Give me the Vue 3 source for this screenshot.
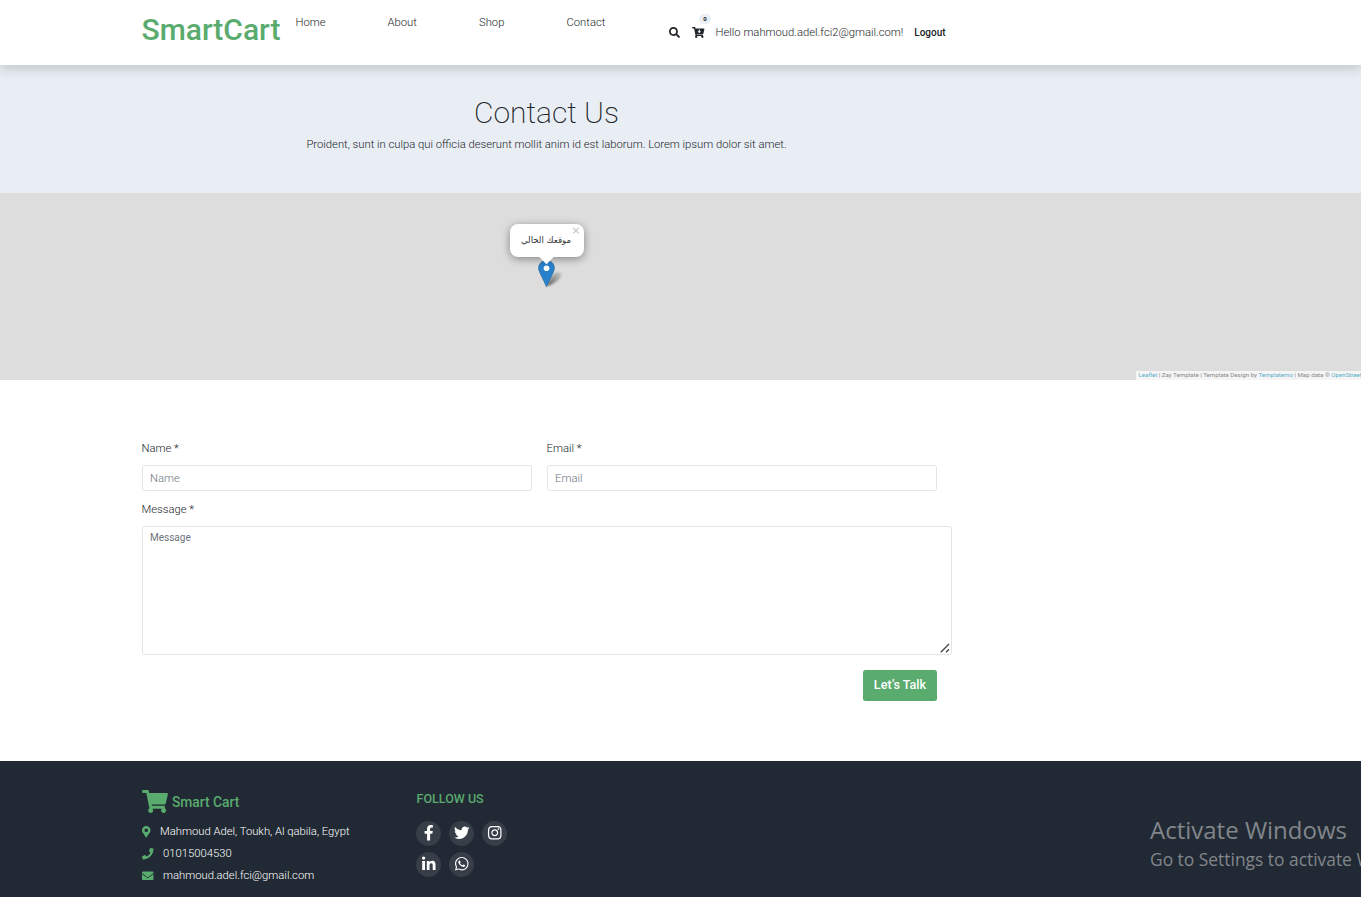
<script setup>
const links = ['Home', 'About', 'Shop', 'Contact']

const icons = {
  search: { box: '0 0 512 512', d: 'M505 442.7L405.3 343c-4.5-4.5-10.6-7-17-7H372c27.6-35.3 44-79.7 44-128C416 93.1 322.9 0 208 0S0 93.1 0 208s93.1 208 208 208c48.3 0 92.7-16.4 128-44v16.3c0 6.4 2.5 12.5 7 17l99.7 99.7c9.4 9.4 24.6 9.4 33.9 0l28.3-28.3c9.4-9.4 9.4-24.6.1-34zM208 336c-70.7 0-128-57.2-128-128 0-70.7 57.2-128 128-128 70.7 0 128 57.2 128 128 0 70.7-57.2 128-128 128z' },
  cartDown: { box: '0 0 576 512', d: 'M504.717 320H211.572l6.545 32h268.418c15.401 0 26.816 14.301 23.403 29.319l-5.517 24.276C523.112 414.668 536 433.828 536 456c0 31.202-25.519 56.444-56.824 55.994-29.823-.429-54.35-24.631-55.155-54.447-.44-16.287 6.085-31.049 16.803-41.548H231.176C241.553 426.165 248 440.326 248 456c0 31.813-26.528 57.431-58.67 55.938-28.54-1.325-51.751-24.385-53.251-52.917-1.158-22.034 10.436-41.455 28.051-51.586L93.883 64H24C10.745 64 0 53.255 0 40V24C0 10.745 10.745 0 24 0h102.529c11.401 0 21.228 8.021 23.513 19.19L159.208 64H551.99c15.401 0 26.816 14.301 23.403 29.319l-47.273 208C525.637 312.246 515.923 320 504.717 320zM403.029 192H360v-60c0-6.627-5.373-12-12-12h-24c-6.627 0-12 5.373-12 12v60h-43.029c-10.691 0-16.045 12.926-8.485 20.485l67.029 67.029c4.686 4.686 12.284 4.686 16.971 0l67.029-67.029c7.559-7.559 2.205-20.485-8.486-20.485z' },
  cart: { box: '0 0 576 512', d: 'M528.12 301.319l47.273-208C578.806 78.301 567.391 64 551.99 64H159.208l-9.166-44.81C147.758 8.021 137.93 0 126.529 0H24C10.745 0 0 10.745 0 24v16c0 13.255 10.745 24 24 24h69.883l70.248 343.435C147.325 417.1 136 435.222 136 456c0 30.928 25.072 56 56 56s56-25.072 56-56c0-15.674-6.447-29.835-16.824-40h209.647C430.447 426.165 424 440.326 424 456c0 30.928 25.072 56 56 56s56-25.072 56-56c0-22.172-12.888-41.332-31.579-50.405l5.517-24.276c3.413-15.018-8.002-29.319-23.403-29.319H218.117l-6.545-32h293.145c11.206 0 20.92-7.754 23.403-18.681z' }
}

const contacts = [
  { text: 'Mahmoud Adel, Toukh, Al qabila, Egypt', kind: 'place', box: '0 0 384 512', d: 'M172.268 501.67C26.97 291.031 0 269.413 0 192 0 85.961 85.961 0 192 0s192 85.961 192 192c0 77.413-26.97 99.031-172.268 309.67-9.535 13.774-29.93 13.773-39.464 0zM192 272c44.183 0 80-35.817 80-80s-35.817-80-80-80-80 35.817-80 80 35.817 80 80 80z' },
  { text: '01015004530', kind: 'phone', box: '0 0 512 512', d: 'M493.4 24.6l-104-24c-11.3-2.6-22.9 3.3-27.5 13.9l-48 112c-4.2 9.8-1.4 21.3 6.9 28l60.6 49.6c-36 76.7-98.9 140.5-177.2 177.2l-49.6-60.6c-6.8-8.3-18.2-11.1-28-6.9l-112 48C3.9 366.5-2 378.1.6 389.4l24 104C27.1 504.2 36.7 512 48 512c256.1 0 464-207.5 464-464 0-11.2-7.7-20.9-18.6-23.4z' },
  { text: 'mahmoud.adel.fci@gmail.com', kind: 'mail', box: '0 0 512 512', d: 'M502.3 190.8c3.9-3.1 9.7-.2 9.7 4.7V400c0 26.5-21.5 48-48 48H48c-26.5 0-48-21.5-48-48V195.6c0-5 5.7-7.8 9.7-4.7 22.4 17.4 52.1 39.5 154.1 113.6 21.1 15.4 56.7 47.8 92.2 47.6 35.7.3 72-32.8 92.3-47.6 102-74.1 131.6-96.3 154-113.7zM256 320c23.2.4 56.6-29.2 73.4-41.4 132.7-96.3 142.8-104.7 173.4-128.7 5.8-4.5 9.2-11.5 9.2-18.9v-19c0-26.5-21.5-48-48-48H48c-26.5 0-48 21.5-48 48v19c0 7.4 3.4 14.3 9.2 18.9 30.6 23.9 40.7 32.4 173.4 128.7 16.8 12.2 50.2 41.8 73.4 41.4z' }
]

const socials = [
  { name: 'facebook', box: '0 0 320 512', d: 'M279.14 288l14.22-92.66h-88.91v-60.13c0-25.35 12.42-50.06 52.24-50.06h40.42V6.26S260.43 0 225.36 0c-73.22 0-121.08 44.38-121.08 124.72v70.62H22.89V288h81.39v224h100.17V288z' },
  { name: 'twitter', box: '0 0 512 512', d: 'M459.37 151.716c.325 4.548.325 9.097.325 13.645 0 138.72-105.583 298.558-298.558 298.558-59.452 0-114.68-17.219-161.137-47.106 8.447.974 16.568 1.299 25.34 1.299 49.055 0 94.213-16.568 130.274-44.832-46.132-.975-84.792-31.188-98.112-72.772 6.498.974 12.995 1.624 19.818 1.624 9.421 0 18.843-1.3 27.614-3.573-48.081-9.747-84.143-51.98-84.143-102.985v-1.299c13.969 7.797 30.214 12.67 47.431 13.319-28.264-18.843-46.781-51.005-46.781-87.391 0-19.492 5.197-37.36 14.294-52.954 51.655 63.675 129.3 105.258 216.365 109.807-1.624-7.797-2.599-15.918-2.599-24.04 0-57.828 46.782-104.934 104.934-104.934 30.213 0 57.502 12.67 76.67 33.137 23.715-4.548 46.456-13.32 66.599-25.34-7.798 24.366-24.366 44.833-46.132 57.827 21.117-2.273 41.584-8.122 60.426-16.243-14.292 20.791-32.161 39.308-52.628 54.253z' },
  { name: 'instagram', box: '0 0 448 512', d: 'M224.1 141c-63.6 0-114.9 51.3-114.9 114.9s51.3 114.9 114.9 114.9S339 319.5 339 255.9 287.7 141 224.1 141zm0 189.6c-41.1 0-74.7-33.5-74.7-74.7s33.5-74.7 74.7-74.7 74.7 33.5 74.7 74.7-33.6 74.7-74.7 74.7zm146.4-194.3c0 14.9-12 26.8-26.8 26.8-14.9 0-26.8-12-26.8-26.8s12-26.8 26.8-26.8 26.8 12 26.8 26.8zm76.1 27.2c-1.7-35.9-9.9-67.7-36.2-93.9-26.2-26.2-58-34.4-93.9-36.2-37-2.1-147.9-2.1-184.9 0-35.8 1.7-67.6 9.9-93.9 36.1s-34.4 58-36.2 93.9c-2.1 37-2.1 147.9 0 184.9 1.7 35.9 9.9 67.7 36.2 93.9s58 34.4 93.9 36.2c37 2.1 147.9 2.1 184.9 0 35.9-1.7 67.7-9.9 93.9-36.2 26.2-26.2 34.4-58 36.2-93.9 2.1-37 2.1-147.8 0-184.8zM398.8 388c-7.8 19.6-22.9 34.7-42.6 42.6-29.5 11.7-99.5 9-132.1 9s-102.7 2.6-132.1-9c-19.6-7.8-34.7-22.9-42.6-42.6-11.7-29.5-9-99.5-9-132.1s-2.6-102.7 9-132.1c7.8-19.6 22.9-34.7 42.6-42.6 29.5-11.7 99.5-9 132.1-9s102.7-2.6 132.1 9c19.6 7.8 34.7 22.9 42.6 42.6 11.7 29.5 9 99.5 9 132.1s2.7 102.7-9 132.1z' },
  { name: 'linkedin', box: '0 -16 448 512', d: 'M100.28 448H7.4V148.9h92.88zM53.79 108.1C24.09 108.1 0 83.5 0 53.8a53.79 53.79 0 0 1 107.58 0c0 29.7-24.1 54.3-53.79 54.3zM447.9 448h-92.68V302.4c0-34.7-.7-79.2-48.29-79.2-48.29 0-55.69 37.7-55.69 76.7V448h-92.78V148.9h89.08v40.8h1.3c12.4-23.5 42.69-48.3 87.88-48.3 94 0 111.28 61.9 111.28 142.3V448z' },
  { name: 'whatsapp', box: '0 0 448 512', d: 'M380.9 97.1C339 55.1 283.2 32 223.9 32c-122.4 0-222 99.6-222 222 0 39.1 10.2 77.3 29.6 111L0 480l117.7-30.9c32.4 17.7 68.9 27 106.1 27h.1c122.3 0 224.1-99.6 224.1-222 0-59.3-25.2-115-67.1-157zm-157 341.6c-33.2 0-65.7-8.9-94-25.7l-6.7-4-69.8 18.3L72 359.2l-4.4-7c-18.5-29.4-28.2-63.3-28.2-98.2 0-101.7 82.8-184.5 184.6-184.5 49.3 0 95.6 19.2 130.4 54.1 34.8 34.9 56.2 81.2 56.1 130.5 0 101.8-84.9 184.6-186.6 184.6zm101.2-138.2c-5.5-2.8-32.8-16.2-37.9-18-5.1-1.9-8.8-2.8-12.5 2.8-3.7 5.6-14.3 18-17.6 21.8-3.2 3.7-6.5 4.2-12 1.4-32.6-16.3-54-29.1-75.5-66-5.7-9.8 5.7-9.1 16.3-30.3 1.8-3.7.9-6.9-.5-9.7-1.4-2.8-12.5-30.1-17.1-41.2-4.5-10.8-9.1-9.3-12.5-9.5-3.2-.2-6.9-.2-10.6-.2-3.7 0-9.7 1.4-14.8 6.9-5.1 5.6-19.4 19-19.4 46.3 0 27.3 19.9 53.7 22.6 57.4 2.8 3.7 39.1 59.7 94.8 83.8 35.2 15.2 49 16.5 66.6 13.9 10.7-1.6 32.8-13.4 37.4-26.4 4.6-13 4.6-24.1 3.2-26.4-1.3-2.5-5-3.9-10.5-6.6z' }
]
</script>

<template>
  <div class="page">
    <header class="header">
      <a class="brand">SmartCart</a>
      <nav class="nav"><a v-for="l in links" :key="l">{{ l }}</a></nav>
      <div class="tools">
        <svg class="i-search" :viewBox="icons.search.box"><path :d="icons.search.d" /></svg>
        <span class="cart">
          <svg :viewBox="icons.cartDown.box"><path :d="icons.cartDown.d" /></svg>
          <b class="badge">0</b>
        </span>
        <span class="hello">Hello mahmoud.adel.fci2@gmail.com!</span>
        <a class="logout">Logout</a>
      </div>
    </header>

    <section class="hero">
      <h1>Contact Us</h1>
      <p>Proident, sunt in culpa qui officia deserunt mollit anim id est laborum. Lorem ipsum dolor sit amet.</p>
    </section>

    <section class="map">
      <svg class="marker-shadow" viewBox="0 0 28 28">
        <defs>
          <linearGradient id="shade" x1="0" y1="1" x2="1" y2="0">
            <stop offset="0" stop-color="#000" stop-opacity=".6" />
            <stop offset="1" stop-color="#000" stop-opacity=".08" />
          </linearGradient>
          <filter id="soft"><feGaussianBlur stdDeviation="1" /></filter>
        </defs>
        <path d="M1 26C5 20 7 13 13 12c5 0 4 5 0 8C9 23 5 26 1 26z" fill="url(#shade)" filter="url(#soft)" />
      </svg>
      <svg class="marker" viewBox="0 0 25 41">
        <path d="M12.5.5C5.6.5.5 6 .5 12.500c0 3 1.100 5.300 2.600 8.200L12.500 40.500l9.400-19.800c1.500-2.900 2.600-5.200 2.600-8.200C24.500 6 19.400.5 12.500.5z" fill="#2a81cb" stroke="#2e6c97" />
        <circle cx="12.500" cy="12.500" r="4.300" fill="#fff" />
      </svg>
      <div class="popup">
        <span class="tip"></span>
        <span class="bubble" dir="rtl">موقعك الحالي</span>
        <span class="close">×</span>
      </div>
      <div class="credit"><a>Leaflet</a> | Zay Template | Template Design by <a>Templatemo</a> | Map data © <a>OpenStreet</a></div>
    </section>

    <form class="form" @submit.prevent>
      <div class="row">
        <div class="field"><label>Name *</label><input placeholder="Name" /></div>
        <div class="field"><label>Email *</label><input placeholder="Email" /></div>
      </div>
      <div class="field message">
        <label>Message *</label>
        <textarea placeholder="Message"></textarea>
        <svg class="grip" viewBox="0 0 10 10"><path d="M.8 9.200L9 1M6 9.200L9 6.200" /></svg>
      </div>
      <div class="actions"><button>Let’s Talk</button></div>
    </form>

    <footer class="footer">
      <div class="about">
        <h2><svg :viewBox="icons.cart.box"><path :d="icons.cart.d" /></svg><span>Smart Cart</span></h2>
        <ul>
          <li v-for="c in contacts" :key="c.kind" :class="c.kind">
            <svg :viewBox="c.box"><path :d="c.d" /></svg><span>{{ c.text }}</span>
          </li>
        </ul>
      </div>
      <div class="follow">
        <h3>FOLLOW US</h3>
        <div class="socials">
          <a v-for="s in socials" :key="s.name"><svg :viewBox="s.box"><path :d="s.d" /></svg></a>
        </div>
      </div>
      <div class="activate">
        <div class="a1">Activate Windows</div>
        <div class="a2">Go to Settings to activate W</div>
      </div>
    </footer>
  </div>
</template>

<style>
body { margin: 0; overflow: hidden; }
</style>

<style scoped>
.page { width: 1361px; height: 897px; overflow: hidden; background: #fff; font-family: Roboto, "Liberation Sans", sans-serif; font-weight: 300; font-size: 11.250px; color: #212529; display: flex; flex-direction: column; }
.page * { box-sizing: border-box; }
svg { fill: currentColor; display: block; overflow: visible; flex: none; }
h1, h2, h3, p, ul { margin: 0; padding: 0; }

.header { height: 65px; flex: none; display: flex; padding-left: 141.500px; background: #fff; box-shadow: 0 5px 10px rgba(0, 0, 0, .15); position: relative; z-index: 2; }
.brand { width: 154px; color: #59ab6e; font-size: 30px; font-weight: 500; line-height: 36px; padding-top: 12px; }
.nav { width: 373px; display: grid; grid-template-columns: 92px 91.500px 87.500px 1fr; line-height: 18px; padding-top: 14px; }
.tools { display: flex; align-items: center; height: 64px; }
.i-search { width: 11px; height: 11px; margin-right: 12px; }
.cart { position: relative; margin-right: 11.500px; }
.cart svg { width: 12.500px; height: 11px; }
.badge { position: absolute; left: 7.500px; top: -13px; width: 12px; height: 10px; border-radius: 5px; background: #e9eef5; font-size: 6px; line-height: 10px; text-align: center; font-weight: 700; }
.hello { width: 198.800px; white-space: nowrap; }
.logout { font-size: 10px; font-weight: 500; padding-top: 1px; color: #212529; }

.hero { height: 128px; flex: none; background: #e9eef5; padding-right: 268px; text-align: center; }
.hero h1 { font-weight: 200; font-size: 30px; line-height: 38px; padding-top: 29px; }
.hero p { line-height: 18px; margin-top: 4px; }

.map { height: 187px; flex: none; background: #ddd; position: relative; overflow: hidden; }
.marker { position: absolute; left: 538px; top: 67px; width: 17px; height: 27px; }
.marker-shadow { position: absolute; left: 545px; top: 67px; width: 28px; height: 28px; }
.popup { position: absolute; left: 509.500px; top: 31px; width: 74px; height: 33px; border-radius: 8px; box-shadow: 0 2px 9px rgba(0, 0, 0, .4); background: #fff; }
.tip { position: absolute; left: 31.500px; top: 27px; width: 11px; height: 11px; background: #fff; transform: rotate(45deg); }
.bubble { position: absolute; left: 0; top: 8px; width: 73px; text-align: center; font: 400 8.600px/16px "DejaVu Sans", sans-serif; color: #333; white-space: nowrap; }
.close { position: absolute; right: 3px; top: 1px; font: 400 11px/12px "DejaVu Sans", sans-serif; color: #c3c3c3; }
.credit { position: absolute; left: 1136px; right: 0; bottom: 0; height: 9px; padding-left: 2.500px; white-space: nowrap; background: rgba(255, 255, 255, .7); font-size: 6.170px; line-height: 8px; font-weight: 400; color: #888; }
.credit a { color: #5aaecb; }

.form { height: 381px; flex: none; padding: 60px 0 0 141.500px; }
.row { display: flex; gap: 15px; }
.row .field { width: 390px; }
.field { display: flex; flex-direction: column; }
.field label { line-height: 18px; margin-bottom: 7px; }
input, textarea { border: 1px solid #e4e5e7; border-radius: 2.500px; outline: 0; padding: 0 7.500px; font-family: inherit; font-weight: 300; background: #fff; resize: none; display: block; width: 100%; }
input { height: 26px; font-size: 11.250px; }
input::placeholder, textarea::placeholder { color: #6c757d; opacity: 1; }
.message { width: 810px; margin-top: 10px; position: relative; }
textarea { height: 129px; font-size: 10px; font-weight: 400; line-height: 15px; padding-top: 3px; }
.grip { position: absolute; right: 2px; bottom: 2px; width: 10px; height: 10px; stroke: #444; stroke-width: 1.300; fill: none; }
.actions { width: 795.500px; display: flex; justify-content: flex-end; margin-top: 15px; }
button { width: 74px; height: 31px; border: 0; padding: 0 0 2px; border-radius: 2.500px; background: #59ab6e; color: #fff; font: 500 12.600px/29px Roboto, sans-serif; }

.footer { height: 136px; flex: none; background: #212934; position: relative; padding-left: 141.500px; display: flex; overflow: hidden; }
.about { width: 274.500px; padding-top: 28px; }
.about h2 { display: flex; color: #59ab6e; font-size: 13.800px; font-weight: 500; line-height: 26px; height: 31px; }
.about h2 svg { width: 26px; height: 23px; margin: 1px 4.500px 0 0; }
.about li { display: flex; align-items: center; height: 22px; color: #fff; font-size: 11.250px; }
.about li svg { color: #59ab6e; width: 11.500px; height: 11.500px; margin-right: 10px; margin-top: 2px; }
.about li.place svg { width: 8.500px; margin-right: 10px; }
.follow h3 { color: #59ab6e; font-size: 12.500px; font-weight: 500; line-height: 18px; padding: 29px 0 0 .6px; }
.socials { width: 110px; display: flex; flex-wrap: wrap; gap: 6px 8px; margin-top: 13px; }
.socials a { width: 25px; height: 25px; border-radius: 50%; background: #373e48; color: #fff; display: flex; justify-content: center; padding-top: 4px; }
.socials svg { height: 15.500px; width: 15.500px; }
.activate { position: absolute; left: 1150px; top: 53px; color: #82868b; font-family: "Open Sans", sans-serif; font-weight: 400; white-space: nowrap; }
.a1 { font-size: 24px; line-height: 32px; }
.a2 { font-size: 17.400px; line-height: 26px; }
</style>
